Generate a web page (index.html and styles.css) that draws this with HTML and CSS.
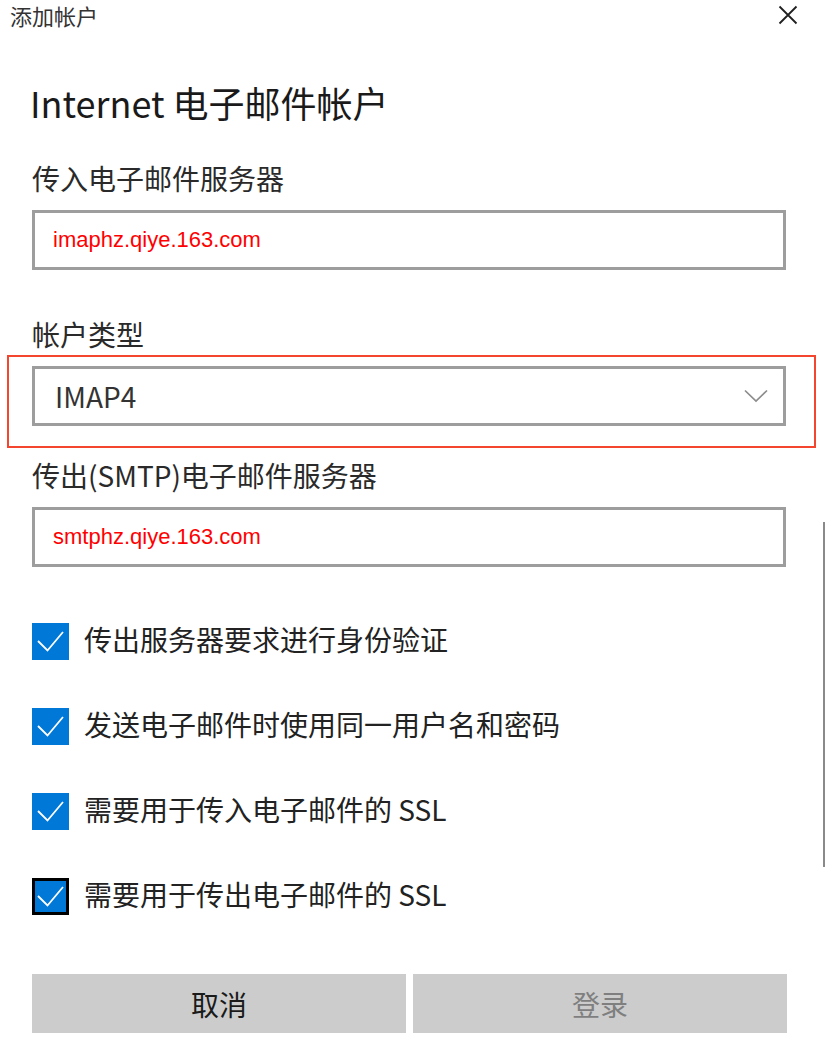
FILE: index.html
```html
<!DOCTYPE html>
<html lang="zh-CN">
<head>
<meta charset="utf-8">
<title>添加帐户</title>
<link rel="stylesheet" href="styles.css">
</head>
<body>
<div class="dialog">
  <header class="titlebar">
    <span class="title">添加帐户</span>
    <svg class="close" width="20" height="20" viewBox="0 0 20 20" aria-label="关闭">
      <path d="M1.5 1.5 L18.5 18.5 M18.5 1.5 L1.5 18.5" stroke="#1f1f1f" stroke-width="1.8" fill="none"/>
    </svg>
  </header>

  <main class="content">
    <h1 class="heading">Internet 电子邮件帐户</h1>

    <div class="label label-first">传入电子邮件服务器</div>
    <div class="field"><span class="value">imaphz.qiye.163.com</span></div>

    <div class="label label-second">帐户类型</div>
    <div class="field select">
      <span class="select-text">IMAP4</span>
      <svg class="chevron" width="24" height="14" viewBox="0 0 24 14">
        <path d="M1 1.5 L12 12 L23 1.5" stroke="#8c8c8c" stroke-width="1.7" fill="none"/>
      </svg>
      <div class="highlight"></div>
    </div>

    <div class="label label-third">传出(SMTP)电子邮件服务器</div>
    <div class="field"><span class="value">smtphz.qiye.163.com</span></div>

    <div class="checks">
      <div class="check-row">
        <span class="box"><svg width="31" height="31" viewBox="0 0 31 31"><path d="M3 15 L12.5 24.5 L28 6" stroke="#fff" stroke-width="1.8" fill="none"/></svg></span>
        <span class="check-text">传出服务器要求进行身份验证</span>
      </div>
      <div class="check-row">
        <span class="box"><svg width="31" height="31" viewBox="0 0 31 31"><path d="M3 15 L12.5 24.5 L28 6" stroke="#fff" stroke-width="1.8" fill="none"/></svg></span>
        <span class="check-text">发送电子邮件时使用同一用户名和密码</span>
      </div>
      <div class="check-row">
        <span class="box"><svg width="31" height="31" viewBox="0 0 31 31"><path d="M3 15 L12.5 24.5 L28 6" stroke="#fff" stroke-width="1.8" fill="none"/></svg></span>
        <span class="check-text">需要用于传入电子邮件的 SSL</span>
      </div>
      <div class="check-row">
        <span class="box focused"><svg width="31" height="31" viewBox="0 0 31 31"><path d="M3 15 L12.5 24.5 L28 6" stroke="#fff" stroke-width="1.8" fill="none"/></svg></span>
        <span class="check-text">需要用于传出电子邮件的 SSL</span>
      </div>
    </div>

    <div class="buttons">
      <button class="btn">取消</button>
      <button class="btn btn-disabled">登录</button>
    </div>
  </main>
  <div class="scrollbar"></div>
</div>
</body>
</html>
```

FILE: styles.css
```css
* {
  box-sizing: border-box;
}

html, body {
  margin: 0;
  padding: 0;
  background: #ffffff;
}

body {
  font-family: "Noto Sans CJK SC", "Noto Sans", sans-serif;
  color: #222222;
  width: 825px;
  height: 1043px;
  overflow: hidden;
}

.dialog {
  position: relative;
  width: 825px;
  height: 1043px;
}

.titlebar {
  height: 30px;
  display: flex;
  align-items: center;
  justify-content: space-between;
  padding: 0 27px 0 10px;
}

.title {
  font-size: 22px;
  line-height: 30px;
  color: #333333;
}

.close {
  display: block;
}

.content {
  padding: 0 39px 0 32px;
  display: flex;
  flex-direction: column;
}

.heading {
  margin: 47px 0 0 -2px;
  font-size: 36px;
  font-weight: normal;
  line-height: 50px;
  color: #1a1a1a;
}

.label {
  font-size: 28px;
  line-height: 40px;
  color: #2a2a2a;
  margin-bottom: 12px;
}

.label-first {
  margin-top: 31px;
}

.label-second {
  margin-top: 44px;
}

.label-third {
  margin-top: 29px;
}

.field {
  position: relative;
  height: 60px;
  border: 3px solid #9d9d9d;
  display: flex;
  align-items: center;
  padding: 0 15px 0 18px;
}

.value {
  font-family: "Liberation Sans", Arial, sans-serif;
  font-size: 22px;
  color: #ff0000;
}

.select {
  justify-content: space-between;
}

.select-text {
  font-size: 28px;
  color: #333333;
  padding-left: 2px;
}

.chevron {
  display: block;
}

.highlight {
  position: absolute;
  left: -28px;
  top: -14px;
  right: -33px;
  bottom: -25px;
  border: 2px solid #f4452f;
  pointer-events: none;
}

.checks {
  margin-top: 56px;
  display: flex;
  flex-direction: column;
  gap: 48px;
}

.check-row {
  display: flex;
  align-items: center;
  gap: 15px;
  height: 37px;
}

.box {
  width: 37px;
  height: 37px;
  background: #0078d7;
  display: flex;
  align-items: center;
  justify-content: center;
  flex: none;
}

.box.focused {
  border: 3px solid #000000;
}

.check-text {
  font-size: 28px;
  color: #222222;
  line-height: 40px;
  padding-bottom: 5px;
}

.buttons {
  margin-top: 59px;
  display: grid;
  grid-template-columns: 1fr 1fr;
  gap: 7px;
  margin-right: -1px;
}

.btn {
  height: 59px;
  border: none;
  background: #cccccc;
  font-family: "Noto Sans CJK SC", "Noto Sans", sans-serif;
  font-size: 28px;
  color: #1a1a1a;
  padding: 0;
}

.btn-disabled {
  color: #7f7f7f;
}

.scrollbar {
  position: absolute;
  right: 0;
  top: 522px;
  width: 2px;
  height: 345px;
  background: #8a8a8a;
}
```
